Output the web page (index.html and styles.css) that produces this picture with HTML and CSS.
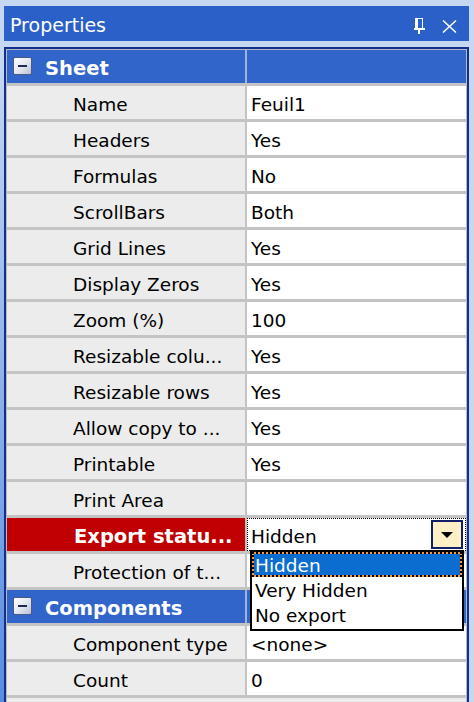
FILE: index.html
```html
<!DOCTYPE html>
<html lang="en">
<head>
    <meta charset="UTF-8">
    <meta name="viewport" content="width=device-width, initial-scale=1.0">
    <title>Properties</title>
    <link rel="stylesheet" href="styles.css">
</head>
<body>
    <div class="window">
        <div class="titlebar">
            <span class="caption">Properties</span>
            <div class="title-buttons">
                <svg class="pin" width="11" height="16" viewBox="0 0 11 16">
                    <rect x="1.5" y="0.5" width="7" height="10" fill="none" stroke="#fff" stroke-width="1"/>
                    <rect x="1" y="0" width="3" height="11" fill="#fff"/>
                    <rect x="0" y="10" width="11" height="2" fill="#fff"/>
                    <rect x="4" y="12" width="2" height="4" fill="#fff"/>
                </svg>
                <svg class="close" width="15" height="13" viewBox="0 0 15 13">
                    <path d="M1 0.5 L14 12.5 M14 0.5 L1 12.5" stroke="#fff" stroke-width="1.5" fill="none"/>
                </svg>
            </div>
        </div>

        <div class="grid">
            <div class="grid-body">
                <div class="row cat">
                    <div class="name"><span class="toggle"></span>Sheet</div>
                    <div class="value"></div>
                </div>
                <div class="row"><div class="name">Name</div><div class="value">Feuil1</div></div>
                <div class="row"><div class="name">Headers</div><div class="value">Yes</div></div>
                <div class="row"><div class="name">Formulas</div><div class="value">No</div></div>
                <div class="row"><div class="name">ScrollBars</div><div class="value">Both</div></div>
                <div class="row"><div class="name">Grid Lines</div><div class="value">Yes</div></div>
                <div class="row"><div class="name">Display Zeros</div><div class="value">Yes</div></div>
                <div class="row"><div class="name">Zoom (%)</div><div class="value">100</div></div>
                <div class="row"><div class="name">Resizable colu...</div><div class="value">Yes</div></div>
                <div class="row"><div class="name">Resizable rows</div><div class="value">Yes</div></div>
                <div class="row"><div class="name">Allow copy to ...</div><div class="value">Yes</div></div>
                <div class="row"><div class="name">Printable</div><div class="value">Yes</div></div>
                <div class="row"><div class="name">Print Area</div><div class="value"></div></div>
                <div class="row selected">
                    <div class="name">Export statu...</div>
                    <div class="value">
                        <span class="current">Hidden</span>
                        <span class="drop-button"><span class="arrow"></span></span>
                        <div class="dropdown">
                            <div class="option active">Hidden</div>
                            <div class="option">Very Hidden</div>
                            <div class="option">No export</div>
                        </div>
                    </div>
                </div>
                <div class="row"><div class="name">Protection of t...</div><div class="value"></div></div>
                <div class="row cat">
                    <div class="name"><span class="toggle"></span>Components</div>
                    <div class="value"></div>
                </div>
                <div class="row"><div class="name">Component type</div><div class="value">&lt;none&gt;</div></div>
                <div class="row"><div class="name">Count</div><div class="value">0</div></div>
            </div>
        </div>
    </div>
</body>
</html>
```

FILE: styles.css
```css
* {
    box-sizing: border-box;
}

html, body {
    margin: 0;
    height: 100%;
}

body {
    font-family: 'DejaVu Sans', sans-serif;
    font-size: 18.5px;
    color: #000;
    background: #c6d8f1;
}

.window {
    height: 100vh;
    display: flex;
    flex-direction: column;
    padding: 6px 5px 0 4px;
    background: linear-gradient(#c6d8f1 8%, #5a8ce0) left top / 4px 100% no-repeat, #c6d8f1;
}

.titlebar {
    height: 35px;
    margin-bottom: 6px;
    padding: 0 12px 0 6px;
    background: #2b60c8;
    color: #fff;
    font-size: 19px;
    display: flex;
    align-items: center;
    justify-content: space-between;
}

.caption {
    padding-top: 3px;
    line-height: 32px;
}

.title-buttons {
    display: flex;
    align-items: center;
    gap: 17px;
    padding-top: 5px;
}

.grid {
    flex: 1;
    display: flex;
    flex-direction: column;
    border: 2px solid #12308a;
    border-bottom: none;
    padding: 1px 1px 0;
    background: #b6bac4;
}

.grid-body {
    flex: 1;
    background: #ececec;
}

.row {
    display: flex;
    height: 36px;
    border-bottom: 3px solid #c4c4c4;
}

.name {
    width: 240px;
    padding: 5px 0 0 66px;
    line-height: 28px;
    border-right: 2px solid #c4c4c4;
    white-space: nowrap;
    overflow: hidden;
}

.value {
    flex: 1;
    padding: 5px 0 0 4px;
    line-height: 28px;
    background: #fff;
    white-space: nowrap;
}

/* category rows */
.cat {
    background: #3165c9;
    color: #fff;
    font-weight: bold;
    font-size: 19.5px;
}

.cat .name {
    display: flex;
    align-items: flex-start;
    padding-left: 6px;
    border-right-color: #9fb3dc;
}

.cat .value {
    background: none;
}

.toggle {
    position: relative;
    width: 19px;
    height: 18px;
    margin: 2px 13px 0 0;
    border: 1px solid #4a5a86;
    border-radius: 2px;
    background: linear-gradient(135deg, #ffffff 0%, #e4e8ef 50%, #b9c2d2 100%);
}

.toggle::after {
    content: '';
    position: absolute;
    left: 4px;
    top: 7px;
    width: 9px;
    height: 2px;
    background: #1d2a55;
}

/* selected row with open dropdown */
.selected .name {
    background: #c00000;
    color: #fff;
    font-weight: bold;
    font-size: 19.5px;
    padding-left: 67px;
}

.selected .value {
    position: relative;
    display: flex;
    align-items: flex-start;
    justify-content: space-between;
    padding: 0 3px 0 4px;
    outline: 1px dotted #000;
    outline-offset: -1px;
}

.current {
    padding-top: 5px;
    line-height: 28px;
}

.drop-button {
    align-self: center;
    width: 32px;
    height: 29px;
    border: 2px solid #101f66;
    background: #fdefc6;
    display: flex;
    align-items: center;
    justify-content: center;
}

.arrow {
    border-left: 6px solid transparent;
    border-right: 6px solid transparent;
    border-top: 6px solid #000;
}

.dropdown {
    position: absolute;
    left: 3px;
    top: 32px;
    width: 214px;
    border: 2px solid #000;
    background: #fff;
    padding-bottom: 2px;
}

.option {
    height: 25px;
    padding: 3px 0 0 3px;
    line-height: 22px;
}

.option.active {
    background: #0b6dd0;
    color: #fff;
    outline: 2px dotted #000;
    outline-offset: -2px;
    box-shadow: inset 0 0 0 2px #f19a3e;
}
```
